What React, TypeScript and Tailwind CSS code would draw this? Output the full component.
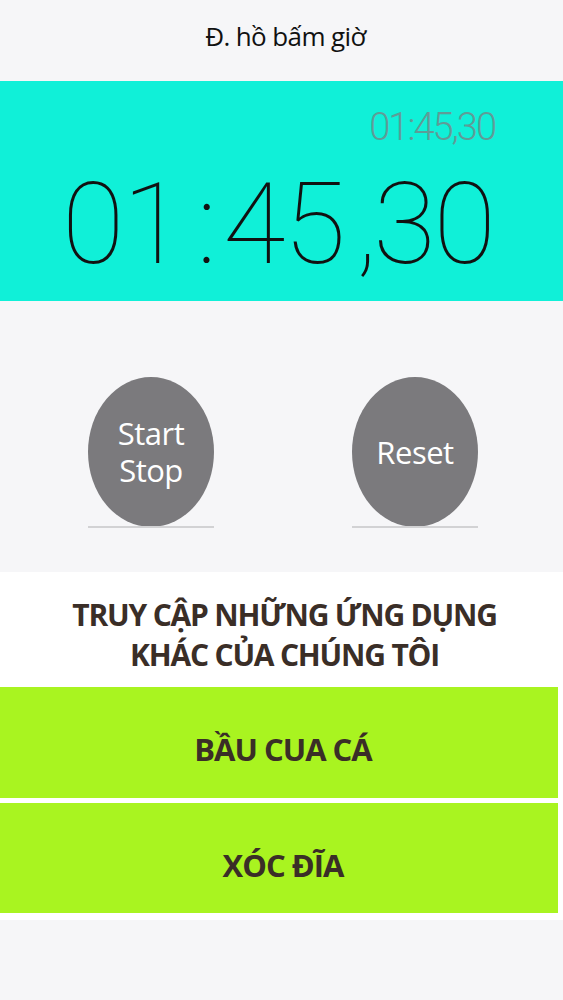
import React from 'react';

const sans = "font-['Open_Sans','Noto_Sans',sans-serif]";
const digits = "font-['Roboto','Liberation_Sans',sans-serif]";

const RoundButton = ({ lines }: { lines: string[] }) => (
    <div className="flex flex-col items-center">
        <button className="flex h-[150px] w-[126px] flex-col items-center justify-center gap-[6px] rounded-[50%] bg-[#7b7a7d] text-[31px] leading-none text-white">
            {lines.map((l) => (
                <span key={l} className="tracking-[-0.5px]">
                    {l}
                </span>
            ))}
        </button>
        <div className="-mt-[1px] h-[2px] w-[126px] bg-[#d2d2d4]" />
    </div>
);

export default function App() {
    return (
        <div className={`flex h-[1000px] w-[563px] flex-col bg-[#f6f6f8] ${sans}`}>
            {/* Header */}
            <div className="flex h-[81px] items-center justify-center pb-[8px] pl-[8px]">
                <h1 className="text-[26px] tracking-[-0.6px] text-[#111]">Đ. hồ bấm giờ</h1>
            </div>

            {/* Timer panel */}
            <div className={`flex h-[220px] flex-col bg-[#10f0d8] ${digits}`}>
                <div className="flex justify-end pt-[26px] pr-[68px]">
                    <span className="text-[38px] leading-[40px] font-light tracking-[-2px] text-[#5f9c97]">01:45,30</span>
                </div>
                <div className="flex items-baseline pl-[62px] pt-[27px] text-[114px] leading-[100px] font-thin tracking-[-2px] text-[#111]">
                    <span>01</span>
                    <span className="ml-[14px]">:</span>
                    <span className="ml-[8px]">45</span>
                    <span className="ml-[12px]">,</span>
                    <span className="-ml-[2px]">30</span>
                </div>
            </div>

            {/* Controls */}
            <div className="flex gap-[138px] pt-[76px] pb-[44px] pl-[88px]">
                <RoundButton lines={['Start', 'Stop']} />
                <RoundButton lines={['Reset']} />
            </div>

            {/* Other apps */}
            <div className="flex flex-col bg-white pb-[7px]">
                <h2 className="pt-[23px] pb-[12px] pl-[6px] text-center text-[30px] leading-[40px] font-bold tracking-[-1.2px] text-[#3a2e27]">
                    TRUY CẬP NHỮNG ỨNG DỤNG
                    <br />
                    KHÁC CỦA CHÚNG TÔI
                </h2>
                <div className="flex w-[558px] flex-col gap-[5px]">
                    <button className="flex h-[111px] items-center justify-center bg-[#a9f420] pt-[14px] pl-[8px] text-[31px] font-bold tracking-[-1px] text-[#3a2e27]">
                        BẦU CUA CÁ
                    </button>
                    <button className="flex h-[110px] items-center justify-center bg-[#a9f420] pt-[14px] pl-[8px] text-[31px] font-bold tracking-[-1px] text-[#3a2e27]">
                        XÓC ĐĨA
                    </button>
                </div>
            </div>
        </div>
    );
}
